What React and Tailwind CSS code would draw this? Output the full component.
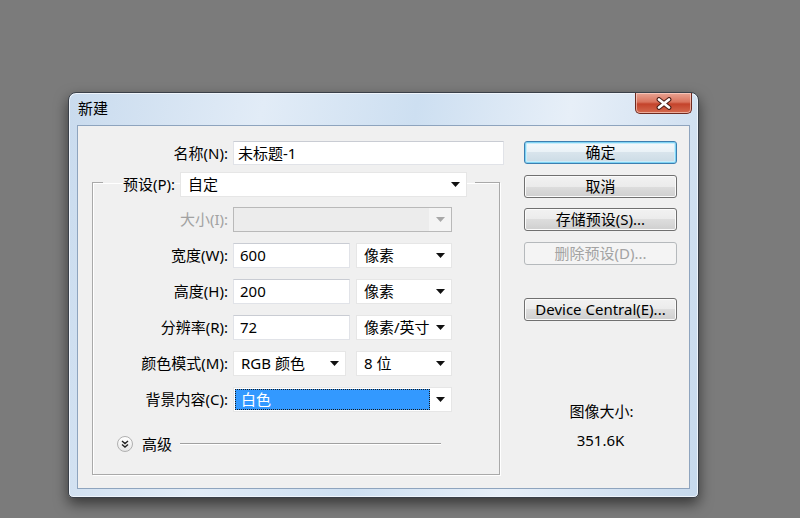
import React from 'react';

const Arrow = ({ disabled }) => (
    <svg width="9" height="5" viewBox="0 0 9 5" className="shrink-0">
        <polygon points="0,0 9,0 4.5,5" fill={disabled ? '#a8a8a8' : '#111'} />
    </svg>
);

function TextBox({ width, value }) {
    return (
        <div className={`${width} h-[25px] bg-white border border-[#e1e3e8] border-t-[#c9ccd3] flex items-center pl-[6px]`}>
            {value}
        </div>
    );
}

function Select({ width, value, disabled }) {
    return (
        <div
            className={`${width} h-[25px] flex items-center justify-between pl-[7px] pr-[6px] border ${
                disabled ? 'bg-[#ececec] border-[#b9b9b9] text-[#a0a0a0]' : 'bg-white border-[#e6e6e6]'
            }`}
        >
            <span>{value}</span>
            {disabled ? (
                <div className="-mr-[6px] h-full w-[22px] bg-[#f4f4f4] flex items-center justify-center">
                    <Arrow disabled />
                </div>
            ) : (
                <Arrow />
            )}
        </div>
    );
}

function Button({ children, kind }) {
    const styles = {
        default:
            'border-[#3c7fb1] bg-[linear-gradient(180deg,#f4f9fc_0%,#e9f1f6_50%,#d8e4ec_50%,#cbdbe5_100%)] shadow-[inset_0_0_0_1px_#7fd3f3,inset_0_0_0_2px_#c9ecfb]',
        normal:
            'border-[#707070] bg-[linear-gradient(180deg,#f2f2f2_0%,#ebebeb_50%,#dddddd_50%,#cfcfcf_100%)] shadow-[inset_0_0_0_1px_#fbfbfb]',
        disabled: 'border-[#b5b9bc] bg-[#f4f4f4] text-[#a3a3a3]',
    };
    return (
        <div className={`h-[23px] w-full rounded-[3px] border flex items-center justify-center ${styles[kind || 'normal']}`}>
            {children}
        </div>
    );
}

function Row({ label, children, muted }) {
    return (
        <div className="flex items-center h-[25px]">
            <div className={`w-[135px] text-right ${muted ? 'text-[#a2a2a2]' : ''}`}>{label}</div>
            <div className="ml-[5px] flex gap-[6px]">{children}</div>
        </div>
    );
}

export default function App() {
    return (
        <div className="w-[800px] h-[518px] overflow-hidden bg-[#7b7b7b] pt-[92px] pl-[68px] font-['Noto_Sans','Noto_Sans_CJK_SC',sans-serif] text-[15px] text-black">
            <div className="w-[631px] h-[406px] rounded-t-[8px] rounded-b-[5px] border border-[#3a4049] bg-[linear-gradient(100deg,#c9dbee_0%,#e2ecf7_28%,#cddff1_50%,#e7eff8_72%,#c6d9ed_100%)] shadow-[0_6px_14px_rgba(0,0,0,0.55),inset_0_0_0_1px_#eef4fb] flex flex-col px-[8px] pb-[8px]">
                {/* title bar */}
                <div className="h-[32px] flex justify-between items-start shrink-0">
                    <span className="mt-[5px] pl-[1px] leading-[20px] text-[15px]">新建</span>
                    <div className="-mr-[2px] w-[57px] h-[21px] rounded-b-[5px] border border-[#6e2a20] border-t-0 bg-[linear-gradient(180deg,#e9a493_0%,#d9735d_45%,#c4432b_55%,#d46a4f_100%)] shadow-[inset_0_0_0_1px_rgba(255,220,210,0.6)] flex items-center justify-center">
                        <svg width="18" height="13" viewBox="0 0 18 13">
                            <path d="M4 2.5 L14 10.5 M14 2.5 L4 10.5" stroke="#4a1d16" strokeWidth="4.8" strokeLinecap="round" />
                            <path d="M4 2.5 L14 10.5 M14 2.5 L4 10.5" stroke="#fff" strokeWidth="2.8" strokeLinecap="round" />
                        </svg>
                    </div>
                </div>

                {/* client area */}
                <div className="flex-1 bg-[#f0f0f0] border border-[#8ea4be] flex">
                    <div className="w-[426px] flex flex-col">
                        <div className="mt-[15px] flex items-center h-[24px]">
                            <div className="w-[150px] text-right">名称(N):</div>
                            <div className="ml-[5px] w-[271px] h-[24px] bg-white border border-[#e1e3e8] border-t-[#c9ccd3] flex items-center pl-[4px]">
                                未标题-1
                            </div>
                        </div>

                        <fieldset className="mt-[2px] ml-[14px] w-[408px] border border-[#a9a9a9] shadow-[1px_1px_0_#fff,inset_1px_1px_0_#fff] px-0 pb-[21px]">
                            <legend className="ml-[10px] pt-[5px] p-0">
                                <div className="flex items-center">
                                    <div className="w-[72px] text-right">预设(P):</div>
                                    <div className="ml-[5px] mr-[8px]">
                                        <Select width="w-[287px]" value="自定" />
                                    </div>
                                </div>
                            </legend>

                            <div className="mt-[10px] flex flex-col gap-[11px]">
                                <Row label="大小(I):" muted>
                                    <Select width="w-[219px]" value="" disabled />
                                </Row>
                                <Row label="宽度(W):">
                                    <TextBox width="w-[117px]" value="600" />
                                    <Select width="w-[96px]" value="像素" />
                                </Row>
                                <Row label="高度(H):">
                                    <TextBox width="w-[117px]" value="200" />
                                    <Select width="w-[96px]" value="像素" />
                                </Row>
                                <Row label="分辨率(R):">
                                    <TextBox width="w-[117px]" value="72" />
                                    <Select width="w-[96px]" value="像素/英寸" />
                                </Row>
                                <Row label="颜色模式(M):">
                                    <div className="mr-[4px]">
                                        <Select width="w-[113px]" value="RGB 颜色" />
                                    </div>
                                    <Select width="w-[96px]" value="8 位" />
                                </Row>
                                <Row label="背景内容(C):">
                                    <div className="w-[219px] h-[25px] bg-white border border-[#e6e6e6] flex items-center pl-[1px] pr-[6px]">
                                        <div className="w-[195px] h-[21px] bg-[#3399ff] border border-dotted border-[#1a1a1a] text-white flex items-center pl-[5px]">
                                            白色
                                        </div>
                                        <div className="flex-1 flex justify-end">
                                            <Arrow />
                                        </div>
                                    </div>
                                </Row>
                            </div>

                            <div className="mt-[23px] h-[18px] flex items-center">
                                <div className="ml-[24px] w-[16px] h-[16px] rounded-full border border-[#b0b0b0] bg-[linear-gradient(180deg,#ffffff_0%,#e6e6e6_100%)] flex items-center justify-center">
                                    <svg width="8" height="8" viewBox="0 0 8 8">
                                        <path d="M1 1 L4 3.5 L7 1 M1 4.5 L4 7 L7 4.5" fill="none" stroke="#222" strokeWidth="1.4" />
                                    </svg>
                                </div>
                                <span className="ml-[9px]">高级</span>
                                <div className="ml-[8px] mr-[58px] flex-1 h-[2px] border-t border-[#a0a0a0] border-b-white border-b" />
                            </div>
                        </fieldset>
                    </div>

                    <div className="ml-[20px] w-[153px] mt-[15px] flex flex-col">
                        <Button kind="default">确定</Button>
                        <div className="mt-[11px]"><Button>取消</Button></div>
                        <div className="mt-[10px]"><Button>存储预设(S)...</Button></div>
                        <div className="mt-[11px]"><Button kind="disabled">删除预设(D)...</Button></div>
                        <div className="mt-[33px]"><Button>Device Central(E)...</Button></div>
                        <div className="mt-[80px] leading-[20px] text-center pl-[2px]">图像大小:</div>
                        <div className="mt-[9px] leading-[20px] text-center">351.6K</div>
                    </div>
                </div>
            </div>
        </div>
    );
}
